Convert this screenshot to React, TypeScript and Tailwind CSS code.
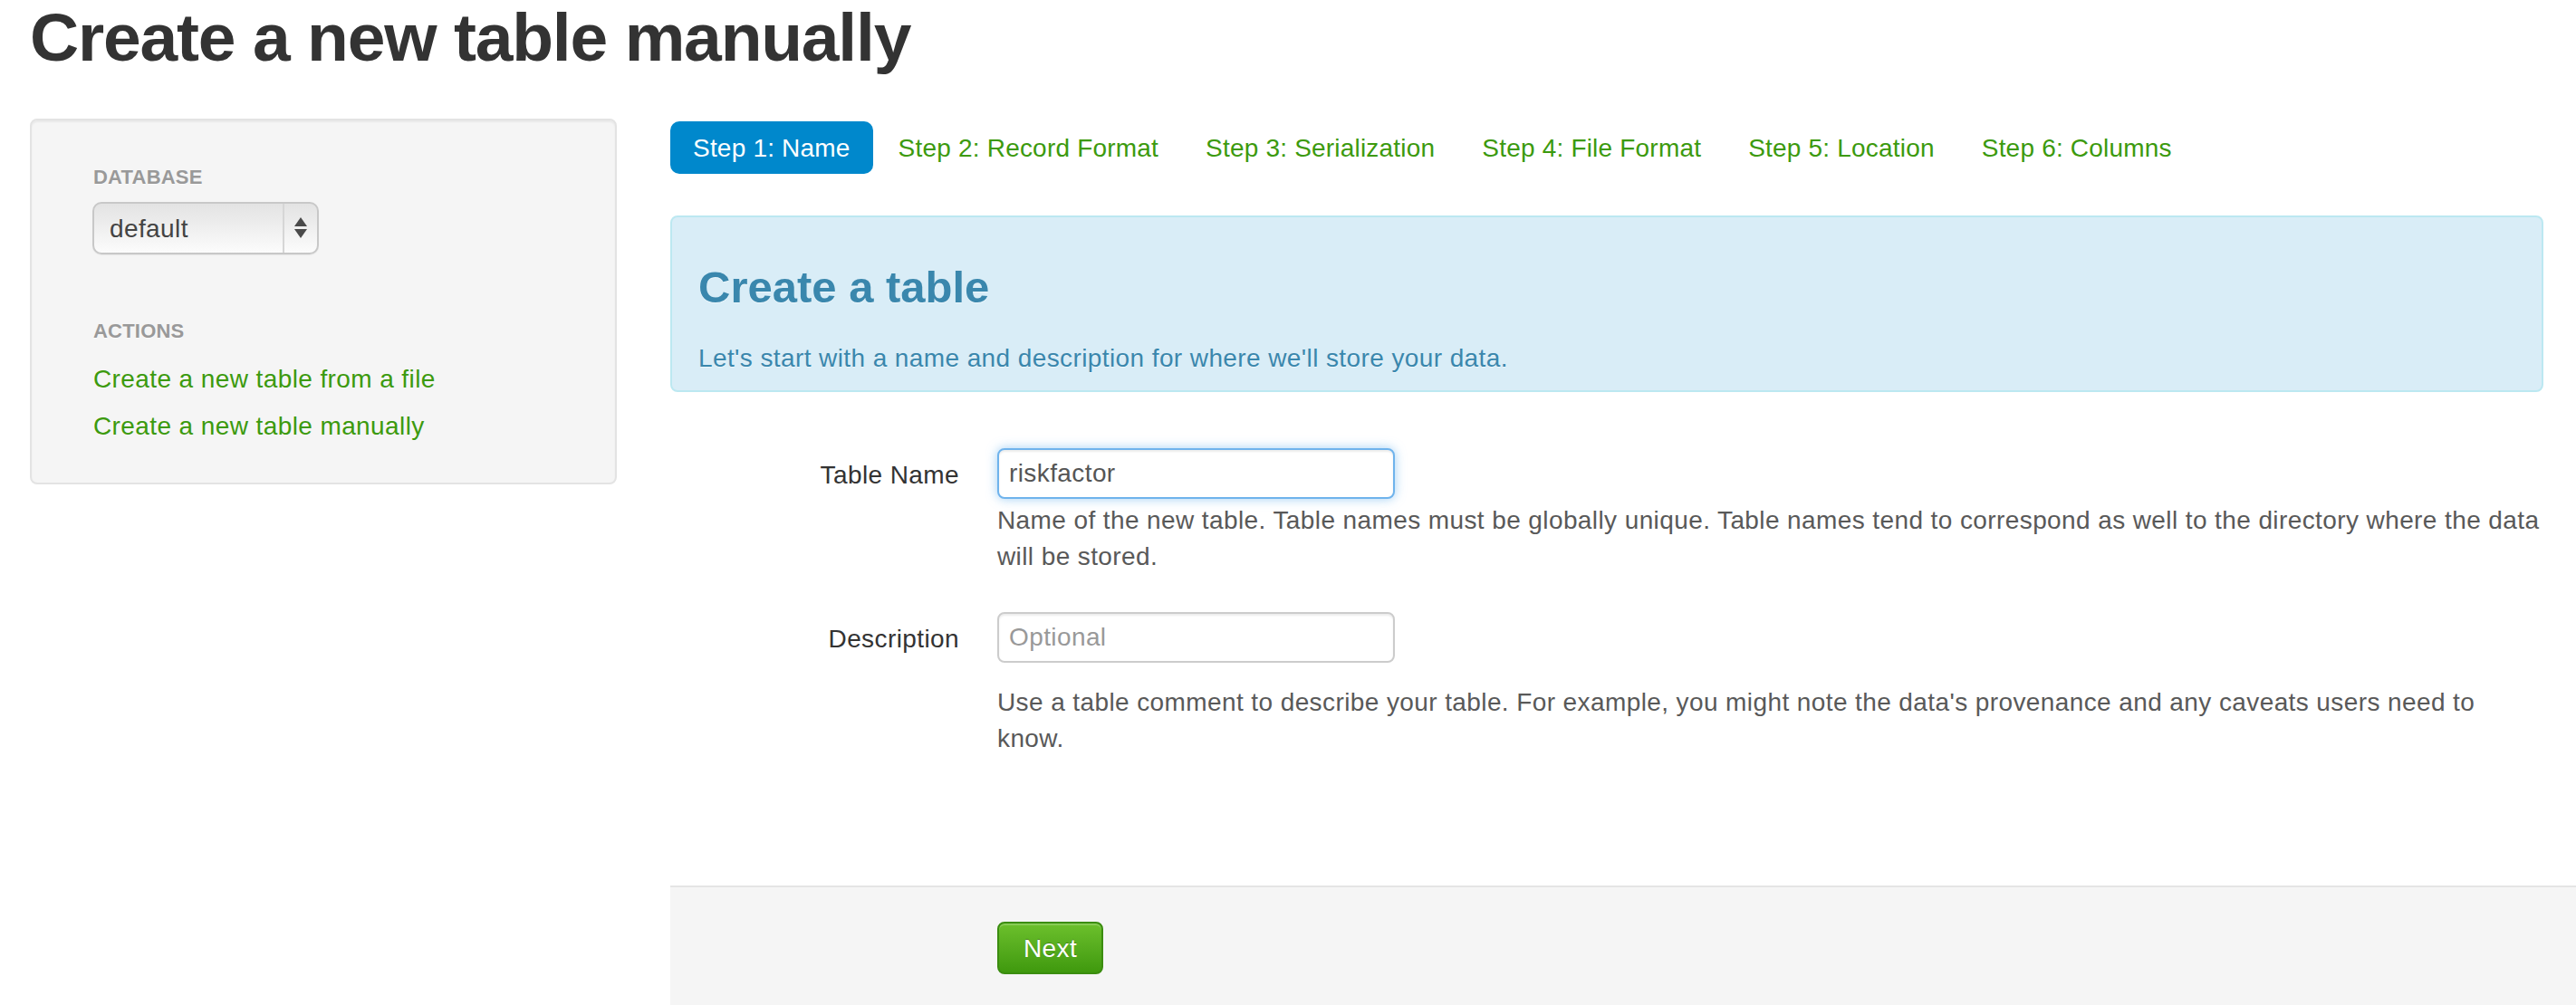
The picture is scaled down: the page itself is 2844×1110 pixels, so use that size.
const steps = [
  'Step 1: Name',
  'Step 2: Record Format',
  'Step 3: Serialization',
  'Step 4: File Format',
  'Step 5: Location',
  'Step 6: Columns',
]

function DatabaseSelect() {
  return (
    <div className="ml-[-1px] mt-[8px] flex h-[58px] w-[250px] overflow-hidden rounded-[10px] border-2 border-[#c8c8c8] bg-gradient-to-b from-[#e3e3e3] via-[#efefef] to-[#fcfcfc] shadow-[0_1px_1px_rgba(0,0,0,0.06)]">
      <span className="flex-1 pl-[17px] pt-[2px] text-[28px] leading-[52px] text-[#444]">default</span>
      <span className="flex w-[38px] items-center justify-center border-l-2 border-[#d6d6d6]">
        <svg width="16" height="26" viewBox="0 0 16 26">
          <path d="M8 1 L15 11 L1 11 Z" fill="#4a4a4a" />
          <path d="M1 14 L15 14 L8 24 Z" fill="#4a4a4a" />
        </svg>
      </span>
    </div>
  )
}

function Sidebar() {
  return (
    <aside className="ml-[33px] w-[648px] shrink-0 self-start rounded-[8px] border-2 border-[#e3e3e3] bg-[#f5f5f5] pb-[38px] pl-[68px] pt-[42px] shadow-[inset_0_2px_2px_rgba(0,0,0,0.05)]">
      <div className="h-[40px] pt-[2px] text-[22px] font-bold uppercase leading-[38px] tracking-[0.2px] text-[#999] [text-shadow:0_1px_0_rgba(255,255,255,0.5)]">
        Database
      </div>
      <DatabaseSelect />
      <div className="mt-[64px] h-[40px] pt-[2px] text-[22px] font-bold uppercase leading-[38px] tracking-[0.2px] text-[#999] [text-shadow:0_1px_0_rgba(255,255,255,0.5)]">
        Actions
      </div>
      <div className="mt-[6px] flex flex-col">
        <a className="pb-[4px] pt-[8px] leading-[40px] text-[#3c9a0e]">Create a new table from a file</a>
        <a className="pb-[4px] pt-[8px] leading-[40px] text-[#3c9a0e]">Create a new table manually</a>
      </div>
    </aside>
  )
}

export default function App() {
  return (
    <div className="min-h-screen overflow-hidden bg-white font-['Liberation_Sans',Arial,sans-serif] text-[28px] leading-[40px] tracking-[0.4px] text-[#333]">
      <h1 className="pl-[33px] text-[75px] font-bold leading-[82px] tracking-[-1.2px] text-[#333]">
        Create a new table manually
      </h1>

      <div className="mt-[49px] flex">
        <Sidebar />

        <main className="ml-[59px] mt-[3px] flex-1">
          <div className="pr-[36px]">
            {/* wizard steps */}
            <nav className="flex gap-[4px] tracking-[0.2px]">
              {steps.map((s, i) => (
                <a
                  key={s}
                  className={
                    i === 0
                      ? 'h-[58px] rounded-[10px] bg-[#0088cc] px-[25px] pt-[2px] leading-[56px] text-white'
                      : 'h-[58px] px-[24px] pt-[2px] leading-[56px] text-[#3c9a0e]'
                  }
                >
                  {s}
                </a>
              ))}
            </nav>

            <div className="mt-[46px] rounded-[8px] border-2 border-[#bce8f1] bg-[#d9edf7] pb-[15px] pl-[29px] pt-[37px] text-[#3a87ad] [text-shadow:0_1px_0_rgba(255,255,255,0.5)]">
              <h3 className="h-[80px] text-[49px] font-bold leading-[80px] tracking-normal">Create a table</h3>
              <p className="mt-[19px] leading-[40px]">
                Let's start with a name and description for where we'll store your data.
              </p>
            </div>

            <form className="mt-[62px] grid grid-cols-[319px_1fr] gap-x-[42px]">
              <label className="h-[56px] pt-[3px] text-right leading-[53px]">Table Name</label>
              <div>
                <input
                  readOnly
                  defaultValue="riskfactor"
                  className="h-[56px] w-[439px] rounded-[8px] border-2 border-[#6fb3ec] bg-white px-[11px] text-[28px] text-[#555] shadow-[inset_0_2px_2px_rgba(0,0,0,0.075),0_0_12px_rgba(82,168,236,0.55)] outline-none"
                />
                <p className="mt-[4px] whitespace-nowrap leading-[40px] text-[#595959]">
                  Name of the new table. Table names must be globally unique. Table names tend to correspond as well to the directory where the data
                  <br />
                  will be stored.
                </p>
              </div>

              <label className="mt-[41px] h-[56px] pt-[3px] text-right leading-[53px]">Description</label>
              <div className="mt-[41px]">
                <input
                  readOnly
                  placeholder="Optional"
                  className="h-[56px] w-[439px] rounded-[8px] border-2 border-[#cccccc] bg-white px-[11px] text-[28px] text-[#555] shadow-[inset_0_2px_2px_rgba(0,0,0,0.075)] outline-none placeholder:text-[#999]"
                />
                <p className="mt-[24px] whitespace-nowrap leading-[40px] text-[#595959]">
                  Use a table comment to describe your table. For example, you might note the data's provenance and any caveats users need to
                  <br />
                  know.
                </p>
              </div>
            </form>
          </div>

          <div className="mt-[142px] border-t-2 border-[#e5e5e5] bg-[#f5f5f5] pb-[40px] pl-[361px] pt-[38px]">
            <button
              type="button"
              className="h-[58px] rounded-[8px] border-2 border-[#3b8d10] bg-gradient-to-b from-[#6cc02c] to-[#3f990d] px-[27px] pt-[2px] text-[28px] leading-[38px] text-white shadow-[inset_0_2px_0_rgba(255,255,255,0.2)] [text-shadow:0_-1px_0_rgba(0,0,0,0.25)]"
            >
              Next
            </button>
          </div>
        </main>
      </div>
    </div>
  )
}
